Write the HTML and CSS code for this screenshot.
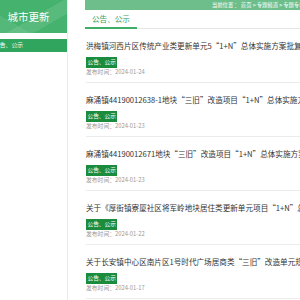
FILE: index.html
```html
<!DOCTYPE html>
<html lang="zh">
<head>
<meta charset="utf-8">
<link rel="stylesheet" href="styles.css">
</head>
<body>
<div class="page">
  <aside class="sidebar">
    <div class="side-head">
      <span class="side-title">城市更新</span>
    </div>
    <div class="side-nav">公告、公示</div>
  </aside>
  <main class="main">
    <div class="crumbs">当前位置 ： 首页 &gt; 专题频道 &gt; 专题专栏 &gt; 城市更新</div>
    <div class="tabbar"><span class="tab">公告、公示</span></div>
    <ul class="list">
      <li class="item">
        <div class="title">洪梅镇河西片区传统产业类更新单元5“1+N”总体实施方案批复</div>
        <span class="tag">公告、公示</span>
        <div class="date">发布时间：2024-01-24</div>
      </li>
      <li class="item">
        <div class="title">麻涌镇44190012638-1地块“三旧”改造项目“1+N”总体实施方案批复</div>
        <span class="tag">公告、公示</span>
        <div class="date">发布时间：2024-01-23</div>
      </li>
      <li class="item">
        <div class="title">麻涌镇44190012671地块“三旧”改造项目“1+N”总体实施方案批复</div>
        <span class="tag">公告、公示</span>
        <div class="date">发布时间：2024-01-23</div>
      </li>
      <li class="item">
        <div class="title">关于《厚街镇寮厦社区将军岭地块居住类更新单元项目“1+N”总体实施方案》的批复</div>
        <span class="tag">公告、公示</span>
        <div class="date">发布时间：2024-01-22</div>
      </li>
      <li class="item">
        <div class="title">关于长安镇中心区南片区1号时代广场居商类“三旧”改造单元规划的批复</div>
        <span class="tag">公告、公示</span>
        <div class="date">发布时间：2024-01-17</div>
      </li>
    </ul>
  </main>
</div>
</body>
</html>
```

FILE: styles.css
```css
html, body {
  margin: 0;
  padding: 0;
  background: #fff;
  overflow: hidden;
  width: 300px;
  height: 300px;
}
body {
  font-family: "Noto Sans CJK SC", "Liberation Sans", sans-serif;
}
.page {
  display: flex;
  align-items: stretch;
  min-height: 300px;
}
.sidebar {
  flex: none;
  width: 77px;
  margin-left: -10px;
  border-right: 1px solid #ebebeb;
}
.side-head {
  height: 33px;
  display: flex;
  align-items: center;
  justify-content: center;
  background:
    linear-gradient(150deg, rgba(255,255,255,0) 55%, rgba(255,255,255,0.1) 55%, rgba(255,255,255,0.1) 75%, rgba(255,255,255,0) 75%),
    linear-gradient(30deg, rgba(255,255,255,0.08) 30%, rgba(255,255,255,0) 30%),
    #45b26e;
}
.side-title {
  color: #fff;
  font-size: 10.5px;
  line-height: 12px;
  padding-top: 1px;
}
.side-nav {
  margin-top: 6px;
  height: 12.5px;
  line-height: 12.5px;
  background: #30a55d;
  color: #fff;
  font-size: 5.8px;
  padding-left: 4px;
  white-space: nowrap;
}
.main {
  flex: none;
  width: 420px;
  margin-left: 17px;
}
.crumbs {
  height: 10px;
  line-height: 11px;
  background: #6dbe8a;
  color: #fff;
  font-size: 5.3px;
  padding-left: 127px;
  white-space: nowrap;
}
.tabbar {
  height: 18px;
  border-bottom: 1px solid #e6e6e6;
  display: flex;
  align-items: flex-end;
}
.tab {
  color: #3c9f5c;
  font-size: 7.6px;
  line-height: 16px;
  padding: 0 7px;
  border-bottom: 2px solid #3fae68;
  margin-bottom: -1px;
  white-space: nowrap;
}
.list {
  list-style: none;
  margin: 0;
  padding: 0 0 0 1px;
}
.item {
  display: flex;
  flex-direction: column;
  align-items: flex-start;
  padding: 10.5px 0 6px;
  border-bottom: 1px solid #ececec;
}
.title {
  font-size: 7.6px;
  line-height: 11px;
  color: #333;
  white-space: nowrap;
}
.tag {
  margin-top: 6.5px;
  background: #1b8c3d;
  color: #fff;
  font-size: 5.7px;
  line-height: 10.5px;
  padding: 0 1.5px;
  white-space: nowrap;
}
.date {
  margin-top: 0.5px;
  font-size: 5.8px;
  line-height: 8px;
  color: #9a9a9a;
  white-space: nowrap;
}
```
